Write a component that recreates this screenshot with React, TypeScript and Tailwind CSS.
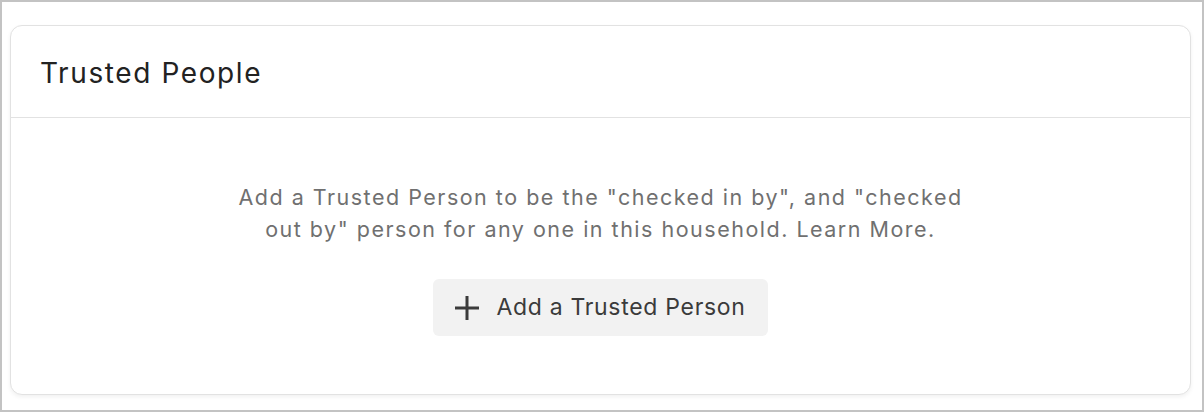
const PlusIcon = () => (
    <svg width="24" height="24" viewBox="0 0 24 24" className="shrink-0">
        <path d="M12 0v24M0 12h24" stroke="#3b3b3b" strokeWidth="3" fill="none" />
    </svg>
);

const TrustedPeopleCard = () => {
    return (
        <div className="rounded-[12px] border border-[#e2e2e2] bg-white shadow-[0_2px_4px_rgba(0,0,0,0.06)]">
            <div className="h-[92px] border-b border-[#e2e2e2] px-[29px] flex items-center">
                <h2 className="text-[28px] font-normal text-[#222222] tracking-[1.6px] pt-[2px]">Trusted People</h2>
            </div>
            <div className="flex flex-col items-center pt-[63px] pb-[58px]">
                <p className="max-w-[745px] text-center text-[21.5px] leading-[32px] tracking-[1.5px] text-[#707070]">
                    Add a Trusted Person to be the "checked in by", and "checked out by" person for any one in this household. Learn More.
                </p>
                <button className="mt-[34px] h-[57px] pl-[22px] pr-[22px] flex items-center gap-[17px] rounded-[6px] bg-[#f2f2f2] text-[23px] tracking-[0.7px] text-[#3b3b3b]">
                    <PlusIcon />
                    <span>Add a Trusted Person</span>
                </button>
            </div>
        </div>
    );
};

const App = () => {
    return (
        <div
            className="w-[1204px] h-[412px] border-2 border-[#c3c3c3] bg-white pt-[23px] pl-[8px] pr-[11px]"
            style={{ fontFamily: "Inter, 'Noto Sans', sans-serif" }}
        >
            <TrustedPeopleCard />
        </div>
    );
};

export default App;
